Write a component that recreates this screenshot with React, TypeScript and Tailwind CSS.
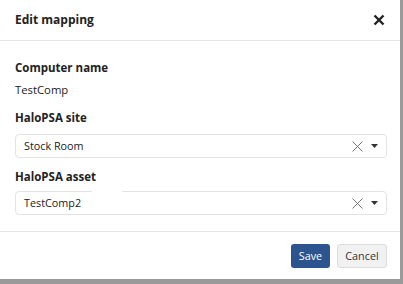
function SelectBox({ value, notch }: { value: string; notch?: boolean }) {
  return (
    <div className="relative flex items-center h-[24px] border border-[#e3e3e3] rounded-[4px] pl-[8px] pr-[8px]">
      {notch && <span className="absolute -top-[1px] left-[76px] w-[30px] h-[1px] bg-white" />}
      <span className="flex-1 text-[10.8px] text-[#222]">{value}</span>
      <svg width="11" height="11" viewBox="0 0 11 11" className="mr-[8px]">
        <path d="M0.5 0.5 L10.5 10.5 M10.5 0.5 L0.5 10.5" stroke="#666" strokeWidth="0.9" />
      </svg>
      <svg width="7" height="4" viewBox="0 0 7 4">
        <path d="M0 0 L7 0 L3.5 4 Z" fill="#333" />
      </svg>
    </div>
  );
}

export default function App() {
  return (
    <div className="w-[403px] h-[284px] bg-[#9a9a9a] overflow-hidden" style={{ fontFamily: '"Open Sans", sans-serif' }}>
      <div className="w-[400px] h-[279px] bg-white flex flex-col">
        <div className="h-[41px] flex items-center justify-between pl-[15px] pr-[15px] border-b border-[#e5e5e5]">
          <span className="text-[12px] font-bold text-[#222]">Edit mapping</span>
          <svg width="12" height="12" viewBox="0 0 12 12">
            <path d="M1.5 1.5 L10.5 10.5 M10.5 1.5 L1.5 10.5" stroke="#222" strokeWidth="2.4" />
          </svg>
        </div>
        <div className="flex flex-col pl-[15px] pr-[13px] pt-[18px] pb-[16px] border-b border-[#e5e5e5]">
          <span className="text-[11.5px] font-bold text-[#222] leading-[18px]">Computer name</span>
          <span className="text-[11.3px] text-[#222] leading-[18px] mt-[4px]">TestComp</span>
          <span className="text-[11.5px] font-bold text-[#222] leading-[18px] mt-[10px]">HaloPSA site</span>
          <div className="mt-[7px]">
            <SelectBox value="Stock Room" />
          </div>
          <span className="text-[11.5px] font-bold text-[#222] leading-[18px] mt-[10px]">HaloPSA asset</span>
          <div className="mt-[5px]">
            <SelectBox value="TestComp2" notch />
          </div>
        </div>
        <div className="flex justify-end gap-[7px] pr-[13px] pt-[12px]">
          <button className="h-[24px] w-[39px] rounded-[3px] bg-[#2c5590] text-white text-[10.8px]">Save</button>
          <button className="h-[24px] w-[50px] rounded-[3px] bg-[#f1f1f1] border border-[#dcdcdc] text-[#333] text-[10.8px]">Cancel</button>
        </div>
      </div>
    </div>
  );
}
